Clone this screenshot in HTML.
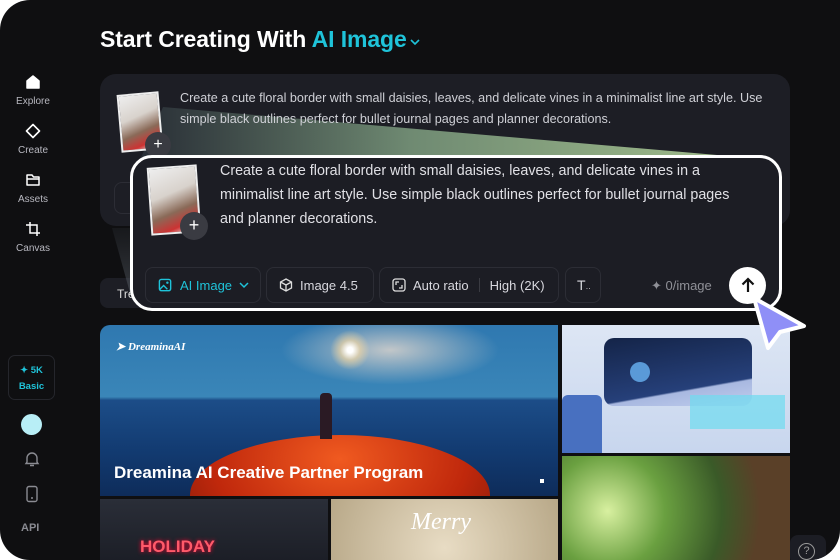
<!DOCTYPE html>
<html><head><meta charset="utf-8"><style>
*{margin:0;padding:0;box-sizing:border-box}
body{width:840px;height:560px;background:#fff;overflow:hidden;font-family:"Liberation Sans",sans-serif;position:relative}
.frame{position:absolute;left:0;top:0;width:840px;height:560px;background:#0f0f11;border-radius:30px 0 30px 30px;overflow:hidden}
.abs{position:absolute}
.nav{position:absolute;left:8px;width:50px;text-align:center;color:#b8b8c0;font-size:10px}
.nav svg{display:block;margin:0 auto 6px}
.btn{position:absolute;top:267px;height:36px;border:1px solid #2c2d35;border-radius:8px;color:#d8d8de;font-size:13px;display:flex;align-items:center;padding-left:12px;gap:7px}
</style></head><body>
<div class="frame">
<div class="abs" style="left:100px;top:26px;font-size:23px;font-weight:bold;color:#fff;letter-spacing:-.1px">Start Creating With <span style="color:#1fc3d9">AI Image</span><svg width="12" height="10" viewBox="0 0 12 10" style="margin-left:2px"><path d="M2 3l4 4 4-4" stroke="#1fc3d9" stroke-width="1.6" fill="none"/></svg></div>

<div class="nav" style="top:74px"><svg width="16" height="16" viewBox="0 0 16 16"><path d="M2 7L8 2l6 5v7H2z" fill="#fff" stroke="#fff" stroke-linejoin="round" stroke-width="1.5"/></svg>Explore</div>
<div class="nav" style="top:123px"><svg width="16" height="16" viewBox="0 0 16 16"><path d="M8 1.5L14.5 8 8 14.5 1.5 8z" fill="none" stroke="#fff" stroke-width="1.6" stroke-linejoin="round"/></svg>Create</div>
<div class="nav" style="top:172px"><svg width="16" height="16" viewBox="0 0 16 16"><path d="M2 3h5l1.5 2H14v8H2z M2 7h12" fill="none" stroke="#fff" stroke-width="1.5" stroke-linejoin="round"/></svg>Assets</div>
<div class="nav" style="top:221px"><svg width="16" height="16" viewBox="0 0 16 16"><path d="M5 1v11h10 M1 4h11v11" fill="none" stroke="#fff" stroke-width="1.5"/></svg>Canvas</div>

<div class="abs" style="left:8px;top:355px;width:47px;height:45px;border:1px solid #25262c;border-radius:7px;text-align:center;color:#1fc3d9;font-size:9.5px;font-weight:bold;padding-top:7px;line-height:16px">✦ 5K<br>Basic</div>
<div class="abs" style="left:21px;top:414px;width:21px;height:21px;border-radius:50%;background:#b8eef6"></div>
<svg class="abs" style="left:24px;top:450px" width="16" height="18" viewBox="0 0 16 18"><path d="M3 12V8a5 5 0 0110 0v4l1 1.5H2z M6 15.5h4" fill="none" stroke="#8a8b92" stroke-width="1.4"/></svg>
<svg class="abs" style="left:25px;top:485px" width="14" height="18" viewBox="0 0 14 18"><rect x="2" y="1.5" width="10" height="15" rx="2" fill="none" stroke="#8a8b92" stroke-width="1.4"/><circle cx="7" cy="13" r="1" fill="#8a8b92"/></svg>
<div class="abs" style="left:21px;top:522px;font-size:11px;font-weight:bold;color:#8a8b92">API</div>

<div class="abs" style="left:100px;top:74px;width:690px;height:152px;background:#1d1e25;border-radius:16px"></div>
<div class="abs" style="left:114px;top:182px;width:30px;height:32px;border:1px solid #2c2d35;border-radius:8px"></div>
<div class="abs" style="left:100px;top:278px;width:50px;height:30px;background:#1d1e25;border-radius:8px;color:#ddd;font-size:12px;padding:9px 0 0 17px">Tre</div>

<svg class="abs" style="left:0;top:0" width="840" height="320"><defs><linearGradient id="g" x1="0" x2="1" y1="0" y2="0"><stop offset="0" stop-color="#2a3038" stop-opacity=".9"/><stop offset=".45" stop-color="#6f8a72"/><stop offset="1" stop-color="#a1bd8c"/></linearGradient><linearGradient id="g2" x1="0" x2="0" y1="0" y2="1"><stop offset="0" stop-color="#3a4048" stop-opacity=".2"/><stop offset="1" stop-color="#5a6068" stop-opacity=".6"/></linearGradient></defs>
<polygon points="163,107 740,157 740,160 140,160" fill="url(#g)"/>
<polygon points="112,228 140,228 140,300 132,300" fill="url(#g2)"/></svg>

<div class="abs" style="left:180px;top:88px;width:600px;font-size:12.6px;line-height:21px;color:#cfd0d6">Create a cute floral border with small daisies, leaves, and delicate vines in a minimalist line art style. Use simple black outlines perfect for bullet journal pages and planner decorations.</div>
<div class="abs" style="left:119px;top:93px;width:42px;height:58px;background:linear-gradient(160deg,#eee 0%,#d8d2cc 40%,#8a6a58 65%,#c33 85%,#eee 100%);border:2px solid #eee;transform:rotate(-5deg)"></div>
<div class="abs" style="left:145px;top:132px;width:26px;height:26px;border-radius:50%;background:#3a3b42;color:#fff;font-size:16px;text-align:center;line-height:25px">+</div>

<div class="abs" style="left:130px;top:155px;width:652px;height:156px;background:#1c1d24;border:3px solid #fff;border-radius:22px"></div>
<div class="abs" style="left:149px;top:166px;width:50px;height:68px;background:linear-gradient(160deg,#eee 0%,#d8d2cc 40%,#8a6a58 65%,#c33 85%,#eee 100%);border:2px solid #eee;transform:rotate(-4deg)"></div>
<div class="abs" style="left:180px;top:212px;width:28px;height:28px;border-radius:50%;background:#3a3b42;color:#fff;font-size:18px;text-align:center;line-height:27px">+</div>
<div class="abs" style="left:220px;top:159px;width:535px;font-size:14.3px;line-height:24px;color:#e0e0e5">Create a cute floral border with small daisies, leaves, and delicate vines in a minimalist line art style. Use simple black outlines perfect for bullet journal pages and planner decorations.</div>

<div class="btn" style="left:145px;width:116px;color:#1fc3d9"><svg width="15" height="15" viewBox="0 0 16 16"><rect x="1.5" y="1.5" width="12" height="12" rx="2" fill="none" stroke="#1fc3d9" stroke-width="1.5"/><path d="M2 12l4-4 4 4" fill="none" stroke="#1fc3d9" stroke-width="1.5"/><circle cx="10" cy="5" r="1.3" fill="#1fc3d9"/></svg>AI Image<svg width="10" height="8" viewBox="0 0 10 8"><path d="M1 2l4 4 4-4" stroke="#1fc3d9" stroke-width="1.5" fill="none"/></svg></div>
<div class="btn" style="left:266px;width:108px"><svg width="14" height="14" viewBox="0 0 14 14"><path d="M7 1l5.5 3v6L7 13 1.5 10V4z M1.5 4L7 7l5.5-3 M7 7v6" fill="none" stroke="#ddd" stroke-width="1.3"/></svg>Image 4.5</div>
<div class="btn" style="left:379px;width:180px"><svg width="14" height="14" viewBox="0 0 14 14"><rect x="1" y="1" width="12" height="12" rx="2.5" fill="none" stroke="#ddd" stroke-width="1.3"/><path d="M4 7V4h3 M10 7v3H7" fill="none" stroke="#ddd" stroke-width="1.3"/></svg>Auto ratio<span style="width:1px;height:14px;background:#3a3b42;margin:0 3px"></span>High (2K)</div>
<div class="btn" style="left:565px;width:36px;padding-left:11px;font-size:14px">T<span style="font-size:8px;margin-left:-7px;margin-top:6px">··</span></div>
<div class="abs" style="left:651px;top:278px;font-size:13px;color:#8f9097">✦ 0/image</div>
<div class="abs" style="left:729px;top:267px;width:37px;height:37px;border-radius:50%;background:#fff"></div>
<svg class="abs" style="left:738px;top:275px" width="20" height="20" viewBox="0 0 20 20"><path d="M10 17V4 M4.5 9.5L10 4l5.5 5.5" stroke="#111" stroke-width="2.2" fill="none"/></svg>

<div class="abs" style="left:100px;top:325px;width:458px;height:171px;border-radius:10px 0 0 0;overflow:hidden;background:linear-gradient(180deg,#2f78b0 0%,#3a86b8 42%,#1c4d88 44%,#123a70 75%,#0e2c5a 100%)">
<div class="abs" style="left:180px;top:-10px;width:220px;height:70px;background:radial-gradient(ellipse,rgba(255,230,210,.7),rgba(255,255,255,0) 70%)"></div>
<div class="abs" style="left:230px;top:5px;width:40px;height:40px;background:radial-gradient(circle,#fff 10%,rgba(255,220,160,.6) 35%,rgba(255,255,255,0) 70%)"></div>
<div class="abs" style="left:90px;top:110px;width:300px;height:120px;border-radius:50% 50% 0 0;background:radial-gradient(ellipse at 50% 20%,#f05a20,#c0280c 60%,#7a1808)"></div>
<div class="abs" style="left:220px;top:68px;width:12px;height:46px;background:#2a1a24;border-radius:4px 4px 0 0"></div>
<div class="abs" style="left:16px;top:15px;color:#fff;font-size:11px;font-style:italic;font-weight:bold;font-family:'Liberation Serif',serif">➤ DreaminaAI</div>
<div class="abs" style="left:14px;top:138px;color:#fff;font-size:17px;font-weight:bold">Dreamina AI Creative Partner Program</div>
<div class="abs" style="left:440px;top:154px;width:4px;height:4px;background:#fff"></div>
</div>
<div class="abs" style="left:562px;top:325px;width:228px;height:128px;background:linear-gradient(180deg,#dde6f4,#c8d6ee)">
<div class="abs" style="left:42px;top:13px;width:148px;height:68px;border-radius:10px;background:linear-gradient(170deg,#142448,#26407a 70%,#a8b8e0 72%,#c0cdee)"></div>
<div class="abs" style="left:68px;top:37px;width:20px;height:20px;border-radius:50%;background:#5a9ad8"></div>
<div class="abs" style="left:0;top:70px;width:40px;height:58px;background:#4870c0;border-radius:6px 6px 0 0"></div>
<div class="abs" style="left:128px;top:70px;width:95px;height:34px;background:rgba(110,220,240,.7)"></div>
</div>
<div class="abs" style="left:562px;top:456px;width:228px;height:110px;background:radial-gradient(circle at 20% 50%,#d8f0a0,#6aa040 30%,#3a5a28 60%,#5a4028 80%)"></div>
<div class="abs" style="left:100px;top:499px;width:228px;height:70px;background:linear-gradient(180deg,#2a2e38,#1a1c24)"><div class="abs" style="left:40px;top:38px;color:#ff5a6a;font-weight:bold;font-size:17px;text-shadow:0 0 4px #f03">HOLIDAY</div></div>
<div class="abs" style="left:331px;top:499px;width:227px;height:70px;background:radial-gradient(circle at 50% 70%,#e8dcc4,#b8a888)"><div class="abs" style="left:80px;top:10px;color:#fff;font-style:italic;font-size:24px;font-family:'Liberation Serif',serif">Merry</div></div>
<div class="abs" style="left:790px;top:535px;width:36px;height:30px;background:#1c1d24;border-radius:8px"><div class="abs" style="left:8px;top:8px;width:17px;height:17px;border:1.5px solid #999;border-radius:50%;color:#999;font-size:11px;text-align:center;line-height:14px">?</div></div>

<svg class="abs" style="left:740px;top:292px" width="70" height="62" viewBox="0 0 70 62"><path d="M14 6L64 34 40 40 28 56z" fill="#8f8ff7" stroke="#fff" stroke-width="4" stroke-linejoin="round"/></svg>
</div>
</body></html>
